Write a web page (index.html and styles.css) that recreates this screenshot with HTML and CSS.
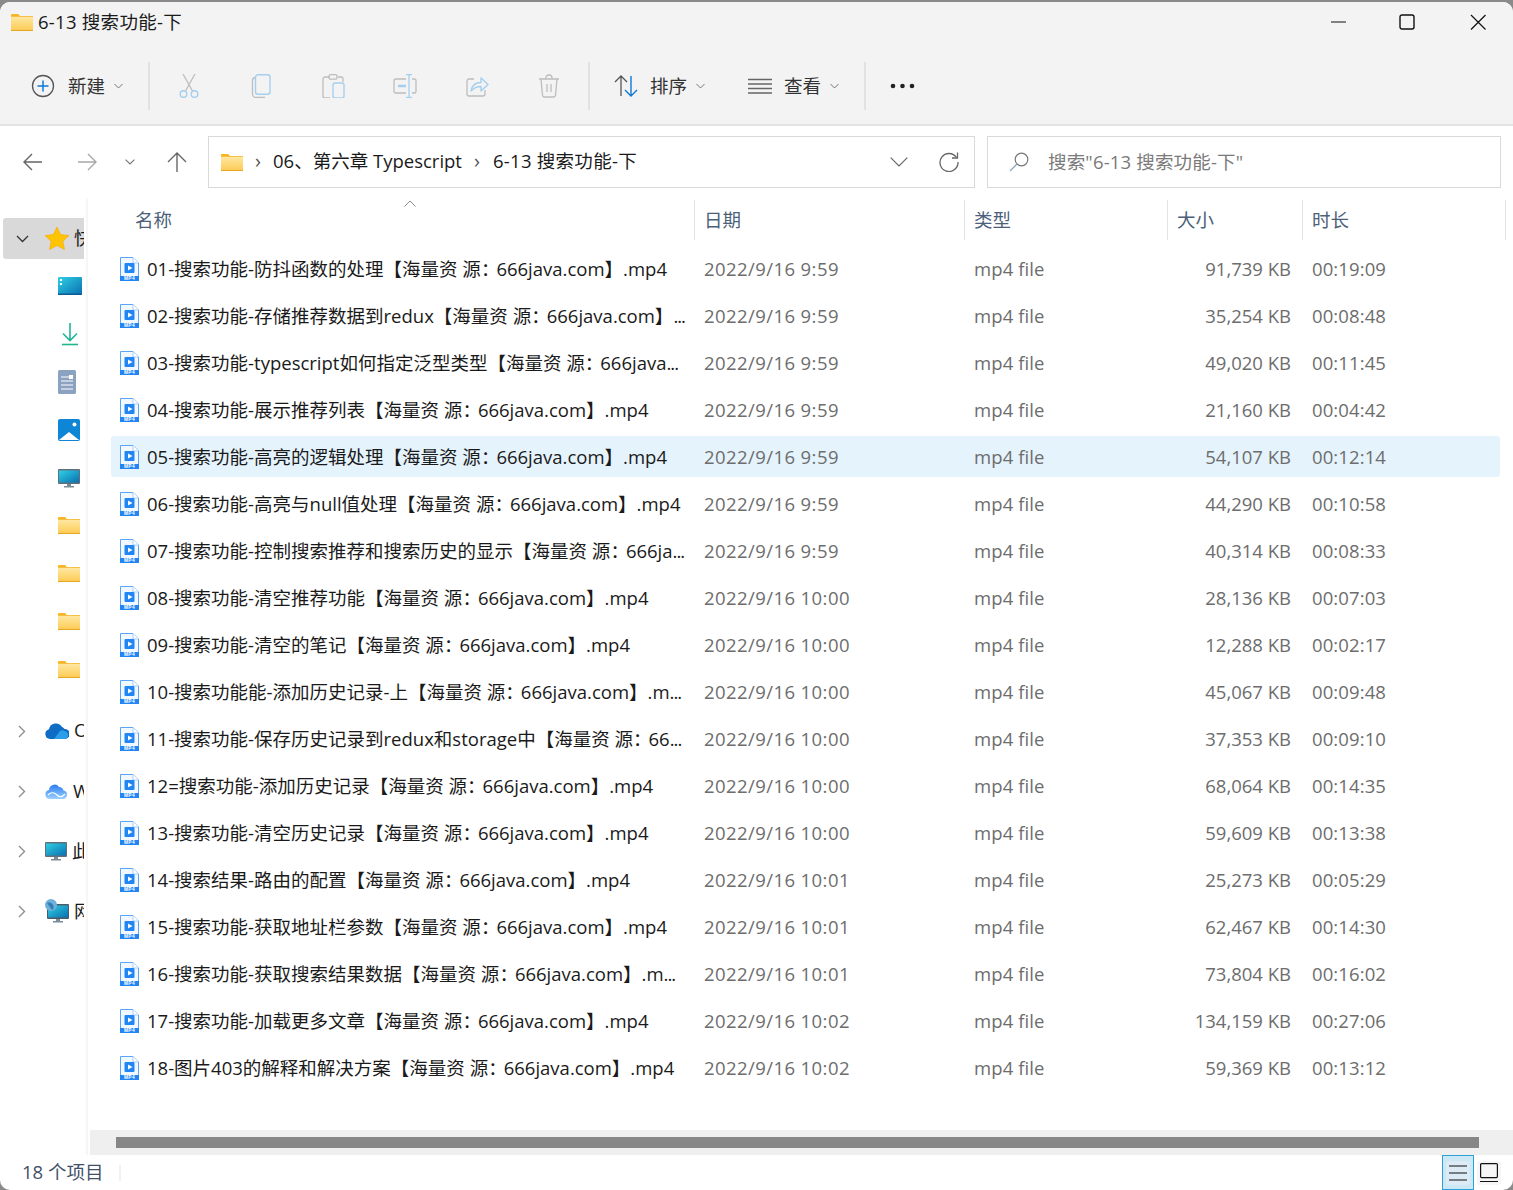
FILE: index.html
```html
<!DOCTYPE html>
<html lang="zh-CN">
<head>
  <meta charset="UTF-8" />
  <title>6-13 搜索功能-下</title>
  <link rel="stylesheet" href="styles.css">
</head>
<body>
  <svg class="sprites" width="0" height="0" aria-hidden="true">
    <defs>
      <linearGradient id="folder-fill" x1="0" y1="0" x2="0" y2="1">
        <stop offset="0" stop-color="#ffe9a6" />
        <stop offset="1" stop-color="#fcca52" />
      </linearGradient>
      <linearGradient id="screen-fill" x1="0" y1="0" x2="1" y2="1">
        <stop offset="0" stop-color="#2fd0e4" />
        <stop offset="1" stop-color="#0a6fb0" />
      </linearGradient>
      <linearGradient id="wps-fill" x1="0" y1="0" x2="0" y2="1">
        <stop offset="0" stop-color="#2a7df0" />
        <stop offset="1" stop-color="#9cd0ff" />
      </linearGradient>
      <symbol id="folder" viewBox="0 0 22 17">
        <path d="M0 1a1 1 0 0 1 1-1h6l2 2H0z" fill="#f9b420" />
        <rect x="0" y="2" width="22" height="15" fill="url(#folder-fill)" />
        <rect x="0" y="2" width="22" height="1" fill="#f5c04a" />
        <rect x="0" y="16" width="22" height="1" fill="#e8a723" />
      </symbol>
      <symbol id="mp4" viewBox="0 0 19 24">
        <path d="M.5.5h12.500l5.500 5.500V23.500H.5z" fill="#f2f8ff" stroke="#5aa5f5" />
        <path d="M13 .5V6h5.500" fill="#fff" stroke="#a9cffa" />
        <rect x="4.500" y="6" width="10" height="10" rx="1" fill="#2186f4" />
        <path d="M8 8.500v5l4.500-2.500z" fill="#fff" />
        <rect x="0" y="19" width="19" height="5" fill="#2186f4" />
        <text x="9.500" y="23.400" text-anchor="middle" font-size="4.800" font-weight="700" letter-spacing=".4" font-family="Liberation Sans, sans-serif" fill="#fff">MP4</text>
      </symbol>
    </defs>
  </svg>

  <div class="window">
    <header class="titlebar">
      <svg class="title-icon" width="22" height="17"><use href="#folder" /></svg>
      <span class="title-text">6-13 搜索功能-下</span>
      <div class="win-controls">
        <svg width="16" height="16" viewBox="0 0 16 16"><path d="M1 8h15" stroke="#111" stroke-width="1.200" /></svg>
        <svg width="16" height="16" viewBox="0 0 16 16"><rect x="1" y="1" width="14" height="14" rx="2" fill="none" stroke="#111" stroke-width="1.400" /></svg>
        <svg width="16" height="16" viewBox="0 0 16 16"><path d="M1 1l14.500 14.500M15.500 1L1 15.500" stroke="#111" stroke-width="1.200" /></svg>
      </div>
    </header>

    <div class="toolbar">
      <div class="tool tool-new">
        <svg width="24" height="24" viewBox="0 0 24 24"><circle cx="12" cy="12" r="10.500" fill="none" stroke="#555" stroke-width="1.300" /><path d="M12 6.500v11M6.500 12h11" stroke="#0f78d4" stroke-width="1.500" /></svg>
        <span>新建</span>
        <svg class="caret" width="9" height="6" viewBox="0 0 9 6"><path d="M.5 1l4 4 4-4" fill="none" stroke="#777" /></svg>
      </div>
      <i class="tool-sep"></i>
      <div class="icon-tools">
        <div class="icon-tool">
          <svg width="24" height="24" viewBox="0 0 24 24"><path d="M6 0l9.500 17M18 0L8.500 17" fill="none" stroke="#bdbdbd" stroke-width="1.300" /><circle cx="6.500" cy="20" r="3.300" fill="none" stroke="#a5cfef" stroke-width="1.400" /><circle cx="17.500" cy="20" r="3.300" fill="none" stroke="#a5cfef" stroke-width="1.400" /></svg>
        </div>
        <div class="icon-tool">
          <svg width="24" height="24" viewBox="0 0 24 24"><path d="M6 3.500a3 3 0 0 0-2.500 3V20a3.500 3.500 0 0 0 3.500 3.500h9" fill="none" stroke="#bdbdbd" stroke-width="1.300" /><rect x="6.500" y=".7" width="14.500" height="19.500" rx="2.500" fill="none" stroke="#a5cfef" stroke-width="1.400" /></svg>
        </div>
        <div class="icon-tool">
          <svg width="24" height="24" viewBox="0 0 24 24"><path d="M9 3H4a2 2 0 0 0-2 2v17a2 2 0 0 0 2 2h5M17 3h3a2 2 0 0 1 2 2v3" fill="none" stroke="#bdbdbd" stroke-width="1.300" /><rect x="8" y=".7" width="8" height="4.500" rx="1.500" fill="none" stroke="#bdbdbd" stroke-width="1.300" /><rect x="12" y="9" width="11" height="15" rx="2" fill="none" stroke="#a5cfef" stroke-width="1.400" /></svg>
        </div>
        <div class="icon-tool">
          <svg width="24" height="24" viewBox="0 0 24 24"><path d="M13 5H3a2 2 0 0 0-2 2v10a2 2 0 0 0 2 2h10M19 5h3a2 2 0 0 1 1 2v10a2 2 0 0 1-1 2h-3" fill="none" stroke="#bdbdbd" stroke-width="1.300" /><path d="M5 12h8" stroke="#a5cfef" stroke-width="2.400" /><path d="M13 .7h6M16 .7v22.600M13 23.300h6" fill="none" stroke="#a5cfef" stroke-width="1.300" /></svg>
        </div>
        <div class="icon-tool">
          <svg width="24" height="24" viewBox="0 0 24 24"><path d="M9 5H4a2 2 0 0 0-2 2v13a2 2 0 0 0 2 2h14a2 2 0 0 0 2-2v-4" fill="none" stroke="#bdbdbd" stroke-width="1.300" /><path d="M6 17c1-6 5-8.500 10-8.500V4l7 6.500-7 6.500v-4.500c-4 0-7 1-10 4.500z" fill="none" stroke="#a5cfef" stroke-width="1.400" stroke-linejoin="round" /></svg>
        </div>
        <div class="icon-tool">
          <svg width="24" height="24" viewBox="0 0 24 24"><path d="M2 5h20M9 5V3.500A2.500 2.500 0 0 1 11.500 1h1A2.500 2.500 0 0 1 15 3.500V5M4 5l1.500 16.500A2 2 0 0 0 7.500 23h9a2 2 0 0 0 2-1.500L20 5" fill="none" stroke="#bdbdbd" stroke-width="1.300" /><path d="M10 10v8M14 10v8" stroke="#bdbdbd" stroke-width="1.300" /></svg>
        </div>
      </div>
      <i class="tool-sep"></i>
      <div class="tool tool-sort">
        <svg width="24" height="24" viewBox="0 0 24 24"><path d="M7 22V2M1 8l6-6 6 6" fill="none" stroke="#555" stroke-width="1.300" /><path d="M17 2v20M11 16l6 6 6-6" fill="none" stroke="#0f78d4" stroke-width="1.400" /></svg>
        <span>排序</span>
        <svg class="caret" width="9" height="6" viewBox="0 0 9 6"><path d="M.5 1l4 4 4-4" fill="none" stroke="#777" /></svg>
      </div>
      <div class="tool tool-view">
        <svg width="24" height="24" viewBox="0 0 24 24"><path d="M0 5.500h24M0 10h24M0 14.500h24M0 19h24" stroke="#666" stroke-width="1.300" /></svg>
        <span>查看</span>
        <svg class="caret" width="9" height="6" viewBox="0 0 9 6"><path d="M.5 1l4 4 4-4" fill="none" stroke="#777" /></svg>
      </div>
      <i class="tool-sep sep-last"></i>
      <svg class="more" width="25" height="6" viewBox="0 0 25 6"><circle cx="3" cy="3" r="2.300" fill="#222" /><circle cx="12.500" cy="3" r="2.300" fill="#222" /><circle cx="22" cy="3" r="2.300" fill="#222" /></svg>
    </div>

    <nav class="navbar">
      <div class="nav-buttons">
        <svg class="nav-back" width="20" height="18" viewBox="0 0 20 18"><path d="M19 9H1M9 1L1 9l8 8" fill="none" stroke="#666" stroke-width="1.400" /></svg>
        <svg class="nav-forward" width="20" height="18" viewBox="0 0 20 18"><path d="M1 9h18M11 1l8 8-8 8" fill="none" stroke="#a8a8a8" stroke-width="1.400" /></svg>
        <svg class="nav-recent" width="10" height="6" viewBox="0 0 10 6"><path d="M.5.700L5 5l4.500-4.300" fill="none" stroke="#777" stroke-width="1.100" /></svg>
        <svg class="nav-up" width="20" height="20" viewBox="0 0 20 20"><path d="M10 20V1M1 10l9-9 9 9" fill="none" stroke="#666" stroke-width="1.400" /></svg>
      </div>
      <div class="address">
        <svg width="22" height="17"><use href="#folder" /></svg>
        <span class="crumb-sep">›</span>
        <span class="crumb">06、第六章 Typescript</span>
        <span class="crumb-sep crumb-sep-2">›</span>
        <span class="crumb crumb-last">6-13 搜索功能-下</span>
        <svg class="addr-drop" width="18" height="10" viewBox="0 0 18 10"><path d="M.7.700L9 9l8.300-8.300" fill="none" stroke="#666" stroke-width="1.200" /></svg>
        <svg class="addr-refresh" width="20" height="20" viewBox="0 0 20 20"><path d="M17.500 5.500A9 9 0 1 0 19 10" fill="none" stroke="#666" stroke-width="1.300" /><path d="M18.500 .5v5.500H13" fill="none" stroke="#666" stroke-width="1.300" /></svg>
      </div>
      <div class="search">
        <svg width="20" height="20" viewBox="0 0 20 20"><circle cx="12.500" cy="7.500" r="6.300" fill="none" stroke="#777" stroke-width="1.200" /><path d="M8 12L1 19" stroke="#8aa8c4" stroke-width="1.300" /></svg>
        <span>搜索"6-13 搜索功能-下"</span>
      </div>
    </nav>

    <div class="content">
      <aside class="sidebar">
        <div class="side-inner">
          <div class="side-row side-quick">
            <svg class="side-caret" width="13" height="8" viewBox="0 0 13 8"><path d="M1 1l5.500 5.500L12 1" fill="none" stroke="#333" stroke-width="1.300" /></svg>
            <svg width="24" height="23" viewBox="0 0 24 23"><path d="M12 0l3.600 7.600 8.400 1-6.200 5.700 1.700 8.300L12 18.500l-7.500 4.100 1.700-8.300L0 8.600l8.400-1z" fill="#ffc400" stroke="#f5a800" stroke-width=".6" /></svg>
            <span class="side-label">快速访问</span>
          </div>
          <div class="side-sub">
            <svg width="24" height="18" viewBox="0 0 24 18"><rect width="24" height="18" rx="1" fill="url(#screen-fill)" /><rect x="2" y="2" width="2" height="2" fill="#fff" /><rect x="2" y="6" width="2" height="2" fill="#fff" /><rect y="16.500" width="24" height="1.500" fill="#0b5d94" /></svg>
          </div>
          <div class="side-sub">
            <svg width="24" height="24" viewBox="0 0 24 24"><path d="M12 1v17M5 11.500l7 7 7-7" fill="none" stroke="#22b39a" stroke-width="1.600" /><path d="M4 22.500h16" stroke="#1fb58f" stroke-width="1.600" /></svg>
          </div>
          <div class="side-sub">
            <svg width="18" height="24" viewBox="0 0 18 24"><rect width="18" height="24" rx="1.500" fill="#8ba3c0" /><path d="M3 7h8M3 11h12M3 15h12M3 19h12" stroke="#fff" stroke-width="1.200" /><rect x="11" y="5" width="4" height="4" fill="#fff" /></svg>
          </div>
          <div class="side-sub">
            <svg width="22" height="22" viewBox="0 0 22 22"><rect width="22" height="22" rx="2" fill="#0f85d6" /><path d="M1 21l10-8 10 8z" fill="#fff" /><circle cx="16.500" cy="5.500" r="2" fill="#fff" /></svg>
          </div>
          <div class="side-sub">
            <svg width="22" height="19" viewBox="0 0 22 19"><rect width="22" height="15" rx="1" fill="#5f6f7c" /><rect x="1" y="1.500" width="20" height="12" fill="url(#screen-fill)" /><rect x="9" y="15" width="4" height="2" fill="#7d8b96" /><rect x="6" y="17" width="10" height="1.500" fill="#7d8b96" /></svg>
          </div>
          <div class="side-sub side-folder"><svg width="22" height="17"><use href="#folder" /></svg></div>
          <div class="side-sub side-folder"><svg width="22" height="17"><use href="#folder" /></svg></div>
          <div class="side-sub side-folder"><svg width="22" height="17"><use href="#folder" /></svg></div>
          <div class="side-sub side-folder"><svg width="22" height="17"><use href="#folder" /></svg></div>
          <div class="side-row side-first">
            <svg class="side-caret" width="8" height="13" viewBox="0 0 8 13"><path d="M1 1l5.500 5.500L1 12" fill="none" stroke="#8f8f8f" stroke-width="1.400" /></svg>
            <svg width="24" height="16" viewBox="0 0 24 16"><path d="M5 16a5 5 0 0 1-1-9.800A7 7 0 0 1 17 4a5 5 0 0 1 2.500 2A5 5 0 0 1 20 16z" fill="#0f6cc4" /><path d="M9 16l6-8a5 5 0 0 1 5 .2A4 4 0 0 1 20 16z" fill="#2a9fe8" /></svg>
            <span class="side-label">OneDrive</span>
          </div>
          <div class="side-row">
            <svg class="side-caret" width="8" height="13" viewBox="0 0 8 13"><path d="M1 1l5.500 5.500L1 12" fill="none" stroke="#8f8f8f" stroke-width="1.400" /></svg>
            <svg width="23" height="16" viewBox="0 0 23 16"><path d="M5 16a4.500 4.500 0 0 1-1-8.900A5.500 5.500 0 0 1 14 4a4.500 4.500 0 0 1 4.500 3.500A4.300 4.300 0 0 1 18 16z" fill="url(#wps-fill)" /><path d="M3 12c3-3 6-3 9 0s5 2 8-1" fill="none" stroke="#fff" stroke-width="1.100" /></svg>
            <span class="side-label">WPS网盘</span>
          </div>
          <div class="side-row">
            <svg class="side-caret" width="8" height="13" viewBox="0 0 8 13"><path d="M1 1l5.500 5.500L1 12" fill="none" stroke="#8f8f8f" stroke-width="1.400" /></svg>
            <svg width="22" height="19" viewBox="0 0 22 19"><rect width="22" height="15" rx="1" fill="#5f6f7c" /><rect x="1" y="1.500" width="20" height="12" fill="url(#screen-fill)" /><rect x="9" y="15" width="4" height="2" fill="#7d8b96" /><rect x="6" y="17" width="10" height="1.500" fill="#7d8b96" /></svg>
            <span class="side-label">此电脑</span>
          </div>
          <div class="side-row">
            <svg class="side-caret" width="8" height="13" viewBox="0 0 8 13"><path d="M1 1l5.500 5.500L1 12" fill="none" stroke="#8f8f8f" stroke-width="1.400" /></svg>
            <svg width="24" height="24" viewBox="0 0 24 24"><rect x="2" y="5" width="22" height="15" rx="1" fill="#4c5d6a" /><rect x="3" y="6.500" width="20" height="12" fill="url(#screen-fill)" /><rect x="11" y="20" width="4" height="2" fill="#7d8b96" /><rect x="8" y="22" width="10" height="1.500" fill="#7d8b96" /><circle cx="6" cy="6" r="6" fill="#6fb0d8" /><path d="M2 4c3-1 5 0 6 2s1 4-1 5" fill="#2f7fb5" /></svg>
            <span class="side-label">网络</span>
          </div>
        </div>
      </aside>

      <main class="files">
        <div class="grid file-head">
          <div class="head-cell head-name"><span>名称</span><svg class="sort-mark" width="12" height="7" viewBox="0 0 12 7"><path d="M.5 6.500L6 1l5.500 5.500" fill="none" stroke="#8a8a8a" /></svg></div>
          <div class="head-cell"><span>日期</span></div>
          <div class="head-cell"><span>类型</span></div>
          <div class="head-cell"><span>大小</span></div>
          <div class="head-cell head-last"><span>时长</span></div>
        </div>

        <div class="grid file-row">
          <div class="name"><svg width="19" height="24"><use href="#mp4" /></svg><span>01-搜索功能-防抖函数的处理【海量资 源<i class="colon">：</i>666java.com】.mp4</span></div>
          <div class="cell">2022/9/16 9:59</div><div class="cell">mp4 file</div><div class="cell size">91,739 KB</div><div class="cell">00:19:09</div>
        </div>
        <div class="grid file-row">
          <div class="name"><svg width="19" height="24"><use href="#mp4" /></svg><span>02-搜索功能-存储推荐数据到redux【海量资 源<i class="colon">：</i>666java.com】<i class="dots">...</i></span></div>
          <div class="cell">2022/9/16 9:59</div><div class="cell">mp4 file</div><div class="cell size">35,254 KB</div><div class="cell">00:08:48</div>
        </div>
        <div class="grid file-row">
          <div class="name"><svg width="19" height="24"><use href="#mp4" /></svg><span>03-搜索功能-typescript如何指定泛型类型【海量资 源<i class="colon">：</i>666java<i class="dots">...</i></span></div>
          <div class="cell">2022/9/16 9:59</div><div class="cell">mp4 file</div><div class="cell size">49,020 KB</div><div class="cell">00:11:45</div>
        </div>
        <div class="grid file-row">
          <div class="name"><svg width="19" height="24"><use href="#mp4" /></svg><span>04-搜索功能-展示推荐列表【海量资 源<i class="colon">：</i>666java.com】.mp4</span></div>
          <div class="cell">2022/9/16 9:59</div><div class="cell">mp4 file</div><div class="cell size">21,160 KB</div><div class="cell">00:04:42</div>
        </div>
        <div class="grid file-row selected">
          <div class="name"><svg width="19" height="24"><use href="#mp4" /></svg><span>05-搜索功能-高亮的逻辑处理【海量资 源<i class="colon">：</i>666java.com】.mp4</span></div>
          <div class="cell">2022/9/16 9:59</div><div class="cell">mp4 file</div><div class="cell size">54,107 KB</div><div class="cell">00:12:14</div>
        </div>
        <div class="grid file-row">
          <div class="name"><svg width="19" height="24"><use href="#mp4" /></svg><span>06-搜索功能-高亮与null值处理【海量资 源<i class="colon">：</i>666java.com】.mp4</span></div>
          <div class="cell">2022/9/16 9:59</div><div class="cell">mp4 file</div><div class="cell size">44,290 KB</div><div class="cell">00:10:58</div>
        </div>
        <div class="grid file-row">
          <div class="name"><svg width="19" height="24"><use href="#mp4" /></svg><span>07-搜索功能-控制搜索推荐和搜索历史的显示【海量资 源<i class="colon">：</i>666ja<i class="dots">...</i></span></div>
          <div class="cell">2022/9/16 9:59</div><div class="cell">mp4 file</div><div class="cell size">40,314 KB</div><div class="cell">00:08:33</div>
        </div>
        <div class="grid file-row">
          <div class="name"><svg width="19" height="24"><use href="#mp4" /></svg><span>08-搜索功能-清空推荐功能【海量资 源<i class="colon">：</i>666java.com】.mp4</span></div>
          <div class="cell">2022/9/16 10:00</div><div class="cell">mp4 file</div><div class="cell size">28,136 KB</div><div class="cell">00:07:03</div>
        </div>
        <div class="grid file-row">
          <div class="name"><svg width="19" height="24"><use href="#mp4" /></svg><span>09-搜索功能-清空的笔记【海量资 源<i class="colon">：</i>666java.com】.mp4</span></div>
          <div class="cell">2022/9/16 10:00</div><div class="cell">mp4 file</div><div class="cell size">12,288 KB</div><div class="cell">00:02:17</div>
        </div>
        <div class="grid file-row">
          <div class="name"><svg width="19" height="24"><use href="#mp4" /></svg><span>10-搜索功能能-添加历史记录-上【海量资 源<i class="colon">：</i>666java.com】.m<i class="dots">...</i></span></div>
          <div class="cell">2022/9/16 10:00</div><div class="cell">mp4 file</div><div class="cell size">45,067 KB</div><div class="cell">00:09:48</div>
        </div>
        <div class="grid file-row">
          <div class="name"><svg width="19" height="24"><use href="#mp4" /></svg><span>11-搜索功能-保存历史记录到redux和storage中【海量资 源<i class="colon">：</i>66<i class="dots">...</i></span></div>
          <div class="cell">2022/9/16 10:00</div><div class="cell">mp4 file</div><div class="cell size">37,353 KB</div><div class="cell">00:09:10</div>
        </div>
        <div class="grid file-row">
          <div class="name"><svg width="19" height="24"><use href="#mp4" /></svg><span>12=搜索功能-添加历史记录【海量资 源<i class="colon">：</i>666java.com】.mp4</span></div>
          <div class="cell">2022/9/16 10:00</div><div class="cell">mp4 file</div><div class="cell size">68,064 KB</div><div class="cell">00:14:35</div>
        </div>
        <div class="grid file-row">
          <div class="name"><svg width="19" height="24"><use href="#mp4" /></svg><span>13-搜索功能-清空历史记录【海量资 源<i class="colon">：</i>666java.com】.mp4</span></div>
          <div class="cell">2022/9/16 10:00</div><div class="cell">mp4 file</div><div class="cell size">59,609 KB</div><div class="cell">00:13:38</div>
        </div>
        <div class="grid file-row">
          <div class="name"><svg width="19" height="24"><use href="#mp4" /></svg><span>14-搜索结果-路由的配置【海量资 源<i class="colon">：</i>666java.com】.mp4</span></div>
          <div class="cell">2022/9/16 10:01</div><div class="cell">mp4 file</div><div class="cell size">25,273 KB</div><div class="cell">00:05:29</div>
        </div>
        <div class="grid file-row">
          <div class="name"><svg width="19" height="24"><use href="#mp4" /></svg><span>15-搜索功能-获取地址栏参数【海量资 源<i class="colon">：</i>666java.com】.mp4</span></div>
          <div class="cell">2022/9/16 10:01</div><div class="cell">mp4 file</div><div class="cell size">62,467 KB</div><div class="cell">00:14:30</div>
        </div>
        <div class="grid file-row">
          <div class="name"><svg width="19" height="24"><use href="#mp4" /></svg><span>16-搜索功能-获取搜索结果数据【海量资 源<i class="colon">：</i>666java.com】.m<i class="dots">...</i></span></div>
          <div class="cell">2022/9/16 10:01</div><div class="cell">mp4 file</div><div class="cell size">73,804 KB</div><div class="cell">00:16:02</div>
        </div>
        <div class="grid file-row">
          <div class="name"><svg width="19" height="24"><use href="#mp4" /></svg><span>17-搜索功能-加载更多文章【海量资 源<i class="colon">：</i>666java.com】.mp4</span></div>
          <div class="cell">2022/9/16 10:02</div><div class="cell">mp4 file</div><div class="cell size">134,159 KB</div><div class="cell">00:27:06</div>
        </div>
        <div class="grid file-row">
          <div class="name"><svg width="19" height="24"><use href="#mp4" /></svg><span>18-图片403的解释和解决方案【海量资 源<i class="colon">：</i>666java.com】.mp4</span></div>
          <div class="cell">2022/9/16 10:02</div><div class="cell">mp4 file</div><div class="cell size">59,369 KB</div><div class="cell">00:13:12</div>
        </div>

        <div class="hscroll"><div class="hscroll-thumb"></div></div>
      </main>
    </div>

    <footer class="statusbar">
      <span class="item-count">18 个项目</span>
      <i class="status-sep"></i>
      <div class="view-btn view-list">
        <div class="view-inner">
          <svg width="18" height="16" viewBox="0 0 18 16"><path d="M0 1h18M0 8h18M0 15h18" stroke="#111" stroke-width="1.200" /></svg>
        </div>
      </div>
      <div class="view-btn view-tile">
        <svg width="18" height="20" viewBox="0 0 18 20"><rect x=".6" y=".6" width="16.800" height="14" rx="1" fill="none" stroke="#111" stroke-width="1.200" /><path d="M0 18.500h18" stroke="#111" stroke-width="1.200" /></svg>
      </div>
    </footer>
  </div>
</body>
</html>
```

FILE: styles.css
```css
* {
  box-sizing: border-box;
}

html,
body {
  margin: 0;
  height: 100%;
}

body {
  background: #8a8a8a;
  padding-top: 2px;
  font-family: 'Open Sans', 'Noto Sans CJK SC', sans-serif;
  font-size: 18.5px;
  color: #1a1a1a;
  overflow: hidden;
}

.sprites {
  position: absolute;
}

svg {
  display: block;
  flex: none;
}

.window {
  display: flex;
  flex-direction: column;
  height: 1188px;
  background: #fff;
  border-radius: 10px;
  overflow: hidden;
}

/* title bar */
.titlebar {
  display: flex;
  align-items: center;
  height: 40px;
  padding-left: 11px;
  background: #f3f3f3;
}

.title-text {
  margin-left: 5px;
  padding-bottom: 2px;
  letter-spacing: 0.27px;
  white-space: nowrap;
}

.win-controls {
  display: flex;
  gap: 55px;
  margin-left: auto;
  margin-right: 27px;
}

.win-controls svg:first-child {
  margin-right: -2px;
}

/* toolbar */
.toolbar {
  display: flex;
  align-items: center;
  height: 84px;
  padding: 6px 0 0 31px;
  background: #f3f3f3;
  border-bottom: 2px solid #e3e3e3;
}

.tool {
  display: flex;
  align-items: center;
  color: #333;
  white-space: nowrap;
}

.tool span {
  margin: 0 9px 0 12px;
  padding-bottom: 2px;
}

.tool-new span {
  margin-left: 13px;
}

.tool-sep {
  width: 2px;
  height: 48px;
  margin: 0 24px 0 25px;
  background: #e2e2e2;
}

.icon-tools {
  display: flex;
  margin: 0 -22px 0 -21px;
}

.icon-tool {
  display: flex;
  justify-content: center;
  width: 72px;
}

.tool-view {
  margin-left: 43px;
}

.sep-last {
  margin: 0 24px 0 25px;
}

/* address row */
.navbar {
  display: flex;
  align-items: center;
  height: 72px;
  padding: 0 12px 0 23px;
}

.nav-buttons {
  display: flex;
  align-items: center;
  width: 185px;
  flex: none;
}

.nav-forward {
  margin-left: 34px;
}

.nav-recent {
  margin-left: 28px;
}

.nav-up {
  margin-left: 32px;
}

.address,
.search {
  display: flex;
  align-items: center;
  height: 52px;
  border: 1px solid #d9d9d9;
  white-space: nowrap;
}

.address {
  width: 767px;
  padding: 0 15px 0 12px;
}

.crumb {
  padding-bottom: 4px;
}

.crumb-last {
  letter-spacing: 0.27px;
}

.crumb-sep {
  margin: 0 12px;
  padding-bottom: 3px;
  font-size: 20px;
  color: #555;
}

.crumb-sep-2 {
  margin: 0 13px 0 12px;
}

.addr-drop {
  margin-left: auto;
}

.addr-refresh {
  margin-left: 31px;
}

.search {
  width: 514px;
  margin-left: 12px;
  padding-left: 21px;
  color: #7a7a7a;
}

.search span {
  margin-left: 19px;
  padding-bottom: 3px;
  letter-spacing: 0.17px;
}

/* main area */
.content {
  display: flex;
  flex: 1;
  min-height: 0;
}

.sidebar {
  width: 88px;
  flex: none;
  margin-right: 2px;
  padding-top: 20px;
  border-right: 2px solid #f6f6f6;
}

.side-inner {
  width: 84px;
  overflow: hidden;
}

.side-row {
  display: flex;
  align-items: center;
  height: 60px;
  white-space: nowrap;
}

.side-caret {
  margin-left: 18px;
  margin-right: 19px;
}

.side-label {
  margin-left: 5px;
  padding-bottom: 3px;
}

.side-quick {
  height: 41px;
  margin-left: 3px;
  margin-bottom: 3px;
  background: #d9d9d9;
  border-radius: 3px 0 0 3px;
}

.side-quick .side-caret {
  margin-left: 13px;
  margin-right: 16px;
}

.side-sub {
  display: flex;
  align-items: center;
  height: 48px;
  padding-left: 58px;
}

.side-folder svg {
  margin-top: -2px;
}

.side-first {
  margin-top: 7px;
}

.files {
  display: flex;
  flex-direction: column;
  flex: 1;
  min-width: 0;
}

.grid {
  display: grid;
  grid-template-columns: 583px 270px 203px 135px 198px;
  align-items: center;
}

.file-head {
  height: 42px;
  margin: 0 0 8px 21px;
  padding-top: 1px;
  color: #4c607a;
}

.head-cell {
  position: relative;
  display: flex;
  align-items: center;
  height: 40px;
  padding-left: 9px;
  border-left: 1px solid #e3e3e3;
}

.head-cell span {
  padding-bottom: 2px;
}

.head-name {
  padding-left: 24px;
  border-left: 0;
}

.head-last {
  width: 204px;
  border-right: 1px solid #e3e3e3;
}

.sort-mark {
  position: absolute;
  left: 293px;
  top: 0;
}

.file-row {
  height: 41px;
  margin: 0 13px 6px 21px;
  border-radius: 3px;
}

.file-row.selected {
  background: #e5f3fd;
}

.name {
  display: flex;
  align-items: center;
  gap: 8px;
  padding-left: 9px;
  white-space: nowrap;
  overflow: hidden;
}

.name span {
  padding-bottom: 2px;
}

.colon {
  font-style: normal;
  letter-spacing: -3px;
}

.dots {
  font-style: normal;
  letter-spacing: -1px;
}

.cell {
  padding-left: 10px;
  color: #6d6d6d;
  letter-spacing: 0.1px;
  white-space: nowrap;
}

.file-row .cell:nth-child(2) {
  letter-spacing: 0.42px;
}

.cell.size {
  padding: 0 11px 0 0;
  letter-spacing: 0;
  text-align: right;
}

.hscroll {
  display: flex;
  align-items: center;
  height: 25px;
  margin-top: auto;
  padding: 0 34px 0 26px;
  background: #efefef;
}

.hscroll-thumb {
  flex: 1;
  height: 11px;
  background: #868686;
}

/* status bar */
.statusbar {
  display: flex;
  align-items: center;
  height: 35px;
  padding-left: 22px;
  color: #3f5068;
}

.item-count {
  padding-bottom: 3px;
  white-space: nowrap;
}

.status-sep {
  width: 2px;
  height: 16px;
  margin-left: 16px;
  background: #f2f2f2;
}

.view-btn {
  display: flex;
  align-items: center;
  justify-content: center;
}

.view-list {
  width: 32px;
  height: 35px;
  margin-left: auto;
  background: #cde8f5;
  border: 1px solid #2d9fd8;
}

.view-inner {
  display: flex;
  align-items: center;
  justify-content: center;
  width: 24px;
  height: 24px;
  background: #dcebf5;
  border-radius: 3px;
}

.view-tile {
  width: 24px;
  height: 24px;
  margin: 0 12px 0 3px;
  background: #f6f6f6;
  border-radius: 3px;
}
```
